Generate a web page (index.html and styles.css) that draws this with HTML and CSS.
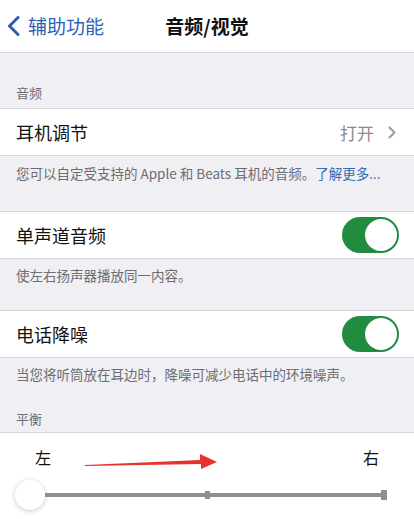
FILE: index.html
```html
<!DOCTYPE html>
<html lang="zh-CN">
<head>
<meta charset="utf-8">
<link rel="stylesheet" href="styles.css">
</head>
<body>
<header class="nav">
  <div class="back">
    <svg class="back-icon" width="13" height="20" viewBox="0 0 13 20"><polyline points="11,1.5 2.5,10 11,18.5" fill="none" stroke="#2c5fb8" stroke-width="3" stroke-linecap="round" stroke-linejoin="round"/></svg>
    <span>辅助功能</span>
  </div>
  <div class="title">音频/视觉</div>
  <div></div>
</header>

<div class="sec-head first">音频</div>
<div class="row">
  <span class="label">耳机调节</span>
  <span class="value">打开
    <svg class="chev" width="8" height="13" viewBox="0 0 8 13"><polyline points="1.5,1.5 6.5,6.5 1.5,11.5" fill="none" stroke="#9b9ba0" stroke-width="2" stroke-linecap="round" stroke-linejoin="round"/></svg>
  </span>
</div>
<div class="foot f1">您可以自定受支持的 Apple 和 Beats 耳机的音频。<span class="link">了解更多...</span></div>

<div class="row">
  <span class="label">单声道音频</span>
  <span class="toggle"><span class="knob"></span></span>
</div>
<div class="foot f2">使左右扬声器播放同一内容。</div>

<div class="row">
  <span class="label">电话降噪</span>
  <span class="toggle"><span class="knob"></span></span>
</div>
<div class="foot f3">当您将听筒放在耳边时，降噪可减少电话中的环境噪声。</div>
<div class="sec-head second">平衡</div>

<section class="balance">
  <div class="lr"><span>左</span><span>右</span></div>
  <div class="slider">
    <span class="thumb"></span>
    <span class="track"><span class="tick mid"></span><span class="tick end"></span></span>
  </div>
  <svg class="arrow" width="140" height="20" viewBox="0 0 140 20"><polygon points="0,12 115,7 115,1 132,9 116,16 116,11 0,13" fill="#e8322c"/></svg>
</section>
</body>
</html>
```

FILE: styles.css
```css
* { box-sizing: border-box; }
html, body { margin: 0; padding: 0; }
body {
  width: 414px;
  height: 519px;
  overflow: hidden;
  background: #efeff4;
  font-family: "Noto Sans CJK SC", "Noto Sans", sans-serif;
  color: #111;
}
.nav {
  height: 53px;
  background: #fff;
  border-bottom: 1px solid #d6d6da;
  display: grid;
  grid-template-columns: 1fr auto 1fr;
  align-items: center;
}
.back {
  display: flex;
  align-items: center;
  gap: 8px;
  padding-left: 7px;
  color: #2c5fb8;
  font-size: 19px;
  line-height: 24px;
}
.back-icon { display: block; }
.title {
  font-size: 19px;
  font-weight: 700;
  line-height: 24px;
  color: #111;
}
.sec-head {
  font-size: 13px;
  line-height: 18px;
  color: #6d6d72;
  padding-left: 16px;
}
.sec-head.first { height: 55px; padding-top: 31px; }
.sec-head.second { height: 49px; padding-top: 27px; }
.row {
  height: 48px;
  background: #fff;
  border-top: 1px solid #d8d8dc;
  border-bottom: 1px solid #d8d8dc;
  display: flex;
  align-items: center;
  justify-content: space-between;
  padding: 0 15px 0 16px;
}
.label { font-size: 18px; line-height: 24px; color: #111; }
.value {
  display: flex;
  align-items: center;
  gap: 14px;
  font-size: 17px;
  color: #8a8a8f;
  padding-right: 3px;
}
.chev { display: block; }
.foot {
  font-size: 13.5px;
  line-height: 18px;
  color: #6d6d72;
  padding: 8px 16px 0;
  white-space: nowrap;
}
.f1 { height: 55px; }
.f2 { height: 51px; padding-top: 7px; }
.f3 { height: 25px; padding-top: 7px; }
.link { color: #2f6cb6; }
.toggle {
  width: 57px;
  height: 36px;
  border-radius: 18px;
  background: #218b40;
  display: flex;
  justify-content: flex-end;
  align-items: center;
  padding: 2px;
}
.knob {
  width: 32px;
  height: 32px;
  border-radius: 50%;
  background: #fff;
}
.balance {
  position: relative;
  height: 87px;
  background: #fff;
  border-top: 1px solid #d8d8dc;
}
.lr {
  display: flex;
  justify-content: space-between;
  padding: 15px 35px 0;
  font-size: 16px;
  line-height: 18px;
  color: #111;
}
.slider {
  display: flex;
  align-items: center;
  margin-top: 14px;
  padding-left: 15px;
}
.thumb {
  width: 30px;
  height: 30px;
  border-radius: 50%;
  background: #fff;
  box-shadow: 0 1px 5px rgba(0,0,0,0.22);
  flex: none;
}
.track {
  position: relative;
  width: 341px;
  height: 4px;
  background: #8f8f8f;
}
.tick {
  position: absolute;
  background: #8f8f8f;
}
.tick.mid { left: 160px; top: -2px; width: 5px; height: 8px; }
.tick.end { left: 336px; top: -3px; width: 6px; height: 10px; }
.arrow {
  position: absolute;
  left: 85px;
  top: 20px;
}
```
